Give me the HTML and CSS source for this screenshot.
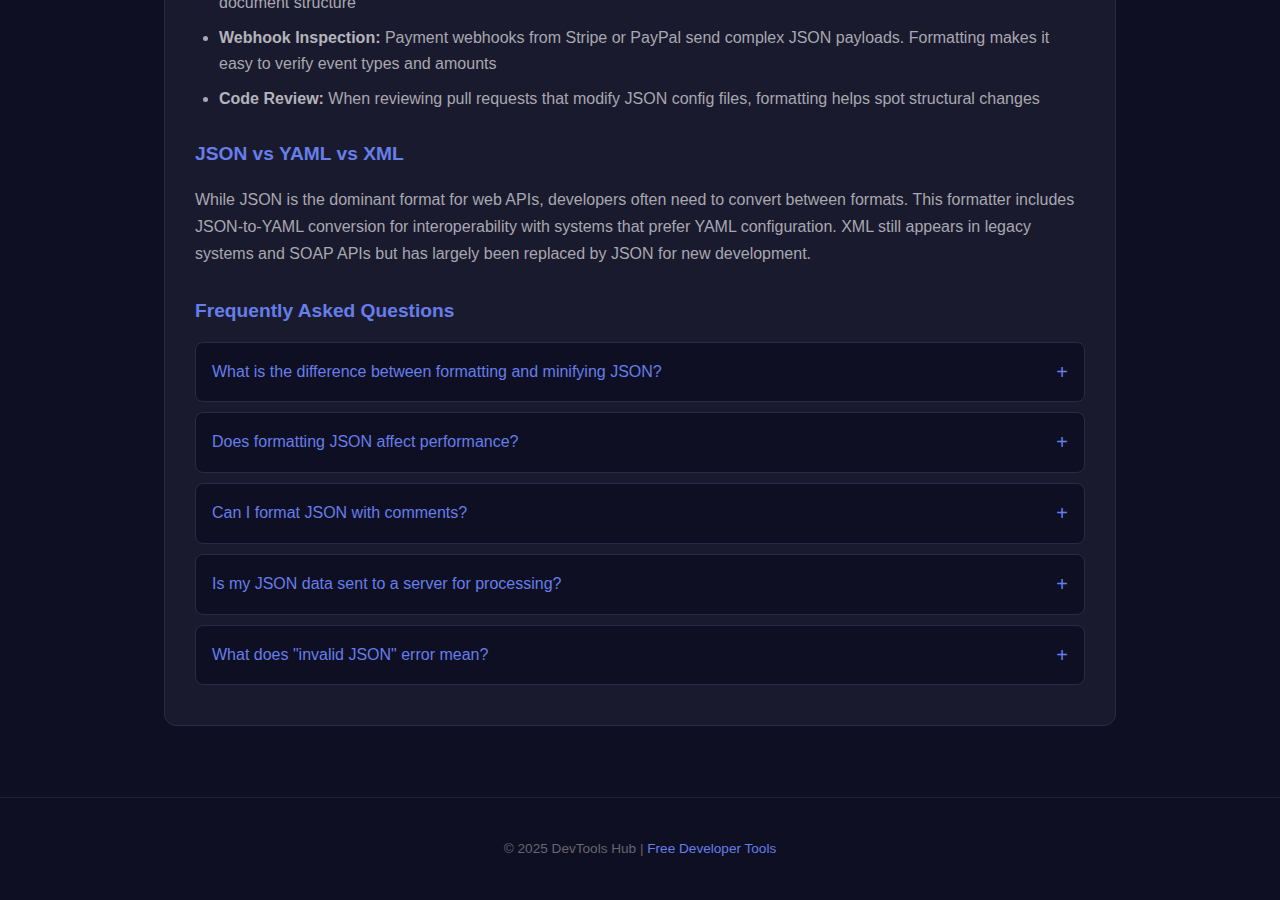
FILE: index.html
```html
<!DOCTYPE html>
<html lang="en">
<head>
  <meta charset="UTF-8">
  <meta name="viewport" content="width=device-width, initial-scale=1.0">
  <title>JSON Formatter - DevTools Hub</title>
  <link rel="stylesheet" href="styles.css">
</head>
<body>
  <main class="container">
    <section class="content-card">
      <!-- Use cases (continued) -->
      <ul class="use-list">
        <li><strong>API Debugging:</strong> Paste raw responses from REST or GraphQL endpoints to instantly reveal nested objects, arrays and document structure</li>
        <li><strong>Webhook Inspection:</strong> Payment webhooks from Stripe or PayPal send complex JSON payloads. Formatting makes it easy to verify event types and amounts</li>
        <li><strong>Code Review:</strong> When reviewing pull requests that modify JSON config files, formatting helps spot structural changes</li>
      </ul>

      <h2>JSON vs YAML vs XML</h2>
      <p>While JSON is the dominant format for web APIs, developers often need to convert between formats. This formatter includes JSON-to-YAML conversion for interoperability with systems that prefer YAML configuration. XML still appears in legacy systems and SOAP APIs but has largely been replaced by JSON for new development.</p>

      <h2 class="faq-title">Frequently Asked Questions</h2>
      <div class="faq-list">
        <div class="faq-item">
          <div class="faq-question"><span>What is the difference between formatting and minifying JSON?</span><span class="faq-toggle">+</span></div>
        </div>
        <div class="faq-item">
          <div class="faq-question"><span>Does formatting JSON affect performance?</span><span class="faq-toggle">+</span></div>
        </div>
        <div class="faq-item">
          <div class="faq-question"><span>Can I format JSON with comments?</span><span class="faq-toggle">+</span></div>
        </div>
        <div class="faq-item">
          <div class="faq-question"><span>Is my JSON data sent to a server for processing?</span><span class="faq-toggle">+</span></div>
        </div>
        <div class="faq-item">
          <div class="faq-question"><span>What does "invalid JSON" error mean?</span><span class="faq-toggle">+</span></div>
        </div>
      </div>
    </section>
  </main>

  <footer class="site-footer">
    <p>&copy; 2025 DevTools Hub | <a href="#">Free Developer Tools</a></p>
  </footer>
</body>
</html>
```

FILE: styles.css
```css
* {
  box-sizing: border-box;
}

body {
  margin: 0;
  background-color: #0f0f23;
  color: #a8a8b0;
  font-family: "Liberation Sans", Arial, sans-serif;
  font-size: 16px;
}

.container {
  max-width: 952px;
  margin: 0 auto;
  padding-bottom: 71px;
}

.content-card {
  margin-top: -67px;
  background-color: #1a1a2e;
  border: 1px solid #2a2a48;
  border-radius: 12px;
  padding: 30px;
}

.use-list {
  margin: 0;
  padding-left: 24px;
}

.use-list li {
  line-height: 1.6;
  margin-bottom: 10px;
}

.use-list strong {
  color: #b4b4bc;
}

.content-card h2 {
  color: #667eea;
  font-size: 19.2px;
  line-height: 1.2;
  margin: 30px 0 21px;
}

.content-card .faq-title {
  margin-bottom: 20px;
}

.content-card p {
  line-height: 1.7;
  margin: 0 0 31px;
}

.faq-item {
  background-color: #0f0f23;
  border: 1px solid #2a2a48;
  border-radius: 8px;
  margin-bottom: 10px;
}

.faq-question {
  display: flex;
  justify-content: space-between;
  align-items: center;
  padding: 20px 16px;
  line-height: 18.75px;
  color: #667eea;
  cursor: pointer;
}

.faq-toggle {
  font-size: 20px;
  font-weight: 300;
  line-height: 18.75px;
}

.site-footer {
  border-top: 1px solid #1f1f36;
  padding: 40px 20px;
  text-align: center;
  font-size: 13.6px;
  color: #666670;
}

.site-footer p {
  margin: 0;
  line-height: 1.6;
}

.site-footer a {
  color: #667eea;
  text-decoration: none;
}
```
